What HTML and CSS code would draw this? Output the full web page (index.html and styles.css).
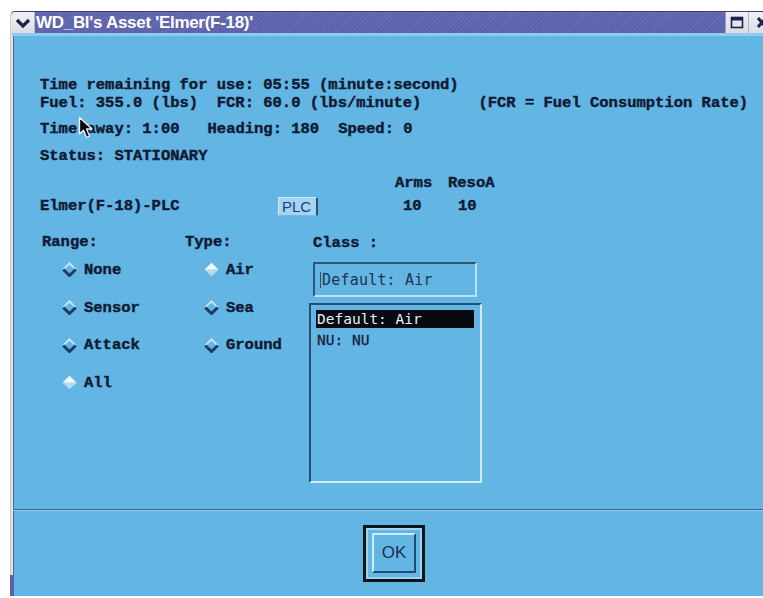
FILE: index.html
```html
<!DOCTYPE html>
<html lang="en">
<head>
<meta charset="utf-8">
<title>WD_Bl's Asset 'Elmer(F-18)'</title>
<link rel="stylesheet" href="styles.css">
</head>
<body>
<div class="window">
  <div class="titlebar">
    <div class="wm-btn menu-btn">
      <svg width="16" height="10" viewBox="0 0 16 10"><polyline points="2,2 8,8 14,2" fill="none" stroke="#1b2150" stroke-width="3.2" stroke-linejoin="miter"/></svg>
    </div>
    <div class="title">WD_Bl's Asset 'Elmer(F-18)'</div>
    <div class="wm-btn max-btn">
      <svg width="14" height="13" viewBox="0 0 14 13"><rect x="1.5" y="1.5" width="11" height="10" fill="none" stroke="#1b2150" stroke-width="1.6"/><rect x="1" y="1" width="12" height="3.5" fill="#1b2150"/></svg>
    </div>
    <div class="wm-btn close-btn">
      <svg width="14" height="13" viewBox="0 0 14 13"><path d="M3 2 L11 11 M11 2 L3 11" stroke="#1b2150" stroke-width="3"/></svg>
    </div>
    <div class="wm-edge"></div>
  </div>

  <div class="client">
    <div class="content">
      <div class="info">
        <div class="line">Time remaining for use: 05:55 (minute:second)</div>
        <div class="line fuel"><span>Fuel: 355.0 (lbs)  FCR: 60.0 (lbs/minute)</span><span class="note">(FCR = Fuel Consumption Rate)</span></div>
        <div class="line away"><span>Time away: 1:00</span><span class="heading">Heading: 180</span><span class="speed">Speed: 0</span></div>
        <div class="line status">Status: STATIONARY</div>
      </div>

      <div class="asset-grid">
        <span></span>
        <span></span>
        <span class="col-head">Arms</span>
        <span class="col-head">ResoA</span>
        <span class="asset-name">Elmer(F-18)-PLC</span>
        <span><button class="plc-btn" type="button">PLC</button></span>
        <span class="val arms">10</span>
        <span class="val reso">10</span>
      </div>

      <div class="options">
        <div class="opt-col range-col">
          <div class="opt-label">Range:</div>
          <div class="radio"><svg class="diamond" viewBox="0 0 14 14"><polyline points="1.2,7 7,1.2 12.8,7" fill="none" stroke="#cde9f8" stroke-width="1.6"/><polyline points="1.2,7 7,12.6 12.8,7" fill="none" stroke="#1b3d64" stroke-width="2.8"/></svg>None</div>
          <div class="radio"><svg class="diamond" viewBox="0 0 14 14"><polyline points="1.2,7 7,1.2 12.8,7" fill="none" stroke="#cde9f8" stroke-width="1.6"/><polyline points="1.2,7 7,12.6 12.8,7" fill="none" stroke="#1b3d64" stroke-width="2.8"/></svg>Sensor</div>
          <div class="radio"><svg class="diamond" viewBox="0 0 14 14"><polyline points="1.2,7 7,1.2 12.8,7" fill="none" stroke="#cde9f8" stroke-width="1.6"/><polyline points="1.2,7 7,12.6 12.8,7" fill="none" stroke="#1b3d64" stroke-width="2.8"/></svg>Attack</div>
          <div class="radio"><svg class="diamond" viewBox="0 0 14 14"><polygon points="0.5,7.2 7,0.6 13.5,7.2" fill="#f7fcff"/><polygon points="0.5,7.2 7,13.4 13.5,7.2" fill="#b0dcf4"/></svg>All</div>
        </div>
        <div class="opt-col type-col">
          <div class="opt-label">Type:</div>
          <div class="radio"><svg class="diamond" viewBox="0 0 14 14"><polygon points="0.5,7.2 7,0.6 13.5,7.2" fill="#f7fcff"/><polygon points="0.5,7.2 7,13.4 13.5,7.2" fill="#b0dcf4"/></svg>Air</div>
          <div class="radio"><svg class="diamond" viewBox="0 0 14 14"><polyline points="1.2,7 7,1.2 12.8,7" fill="none" stroke="#cde9f8" stroke-width="1.6"/><polyline points="1.2,7 7,12.6 12.8,7" fill="none" stroke="#1b3d64" stroke-width="2.8"/></svg>Sea</div>
          <div class="radio"><svg class="diamond" viewBox="0 0 14 14"><polyline points="1.2,7 7,1.2 12.8,7" fill="none" stroke="#cde9f8" stroke-width="1.6"/><polyline points="1.2,7 7,12.6 12.8,7" fill="none" stroke="#1b3d64" stroke-width="2.8"/></svg>Ground</div>
        </div>
        <div class="opt-col class-col">
          <div class="opt-label class-label">Class :</div>
          <div class="text-field"><span class="caret"></span>Default: Air</div>
          <div class="list-box">
            <div class="list-item selected">Default: Air</div>
            <div class="list-item">NU: NU</div>
          </div>
        </div>
      </div>
    </div>

    <div class="footer">
      <div class="default-ring">
        <button class="ok-btn" type="button">OK</button>
      </div>
    </div>
  </div>
  <div class="resize-grip"></div>
</div>

<svg class="pointer" width="18" height="24" viewBox="0 0 18 24">
  <path d="M1.5 1.5 L1.5 18 L5.5 14.2 L8.6 21.5 L11.6 20.2 L8.6 13 L14 13 Z" fill="#0b0b10" stroke="#f2f2f2" stroke-width="1.3" stroke-linejoin="round"/>
</svg>
</body>
</html>
```

FILE: styles.css
```css
html, body {
  margin: 0;
  padding: 0;
}

body {
  width: 763px;
  height: 598px;
  overflow: hidden;
  background: #ffffff;
  position: relative;
}

.window {
  margin: 11px 0 0 10px;
  width: 766px;
  border-left: 1px solid #c9c9cf;
  border-radius: 5px 0 0 0;
  position: relative;
}

/* ---------- title bar ---------- */
.titlebar {
  display: flex;
  height: 22px;
  border-top: 1px solid #3a3f73;
  box-sizing: border-box;
  background:
    repeating-linear-gradient(135deg, rgba(255,255,255,0.08) 0 1px, rgba(0,0,0,0) 1px 3px),
    linear-gradient(#5e64b0, #5a60a9);
  border-radius: 4px 0 0 0;
}

.wm-btn {
  width: 24px;
  flex: none;
  display: flex;
  align-items: center;
  justify-content: center;
  background: linear-gradient(#f0f0f4, #dcdce4);
  box-sizing: border-box;
}

.menu-btn {
  border-radius: 4px 0 0 0;
  border-right: 1px solid #b9bac8;
}

.max-btn {
  border-left: 1px solid #9a9cb8;
  border-right: 1px solid #b0b2c4;
}

.close-btn {
  justify-content: flex-start;
  padding-left: 6px;
}

.wm-edge {
  width: 4px;
  flex: none;
  background: #d8d8e0;
}

.title {
  flex: 1;
  padding-left: 1px;
  font-family: "Liberation Sans", Arial, sans-serif;
  font-weight: bold;
  font-size: 17px;
  line-height: 21px;
  color: #ffffff;
  letter-spacing: -0.3px;
  white-space: nowrap;
}

/* ---------- client area ---------- */
.client {
  width: 764px;
  box-sizing: border-box;
  border-left: 2px solid #e4e4e8;
  border-top: 3px solid #8fcbec;
  background: #63b6e4;
  box-shadow: inset 1px 0 0 #47698c;
}

.content {
  height: 473px;
  padding: 40px 0 0 27px;
  box-sizing: border-box;
  font-family: "Liberation Mono", "Courier New", monospace;
  font-weight: bold;
  font-size: 15.5px;
  color: #111a33;
  -webkit-text-stroke: 0.45px #111a33;
}

.line {
  height: 18px;
  line-height: 18px;
  white-space: pre;
}

.fuel {
  display: flex;
}

.fuel .note {
  margin-left: 57px;
}

.away {
  margin-top: 8px;
  display: flex;
}

.away .heading {
  margin-left: 28px;
}

.away .speed {
  margin-left: 19px;
}

.status {
  margin-top: 9px;
}

/* ---------- asset row ---------- */
.asset-grid {
  margin-top: 9px;
  display: grid;
  grid-template-columns: 238px 117px 53px 50px;
  grid-template-rows: 18px 20px;
  row-gap: 4px;
  align-items: center;
  line-height: 18px;
}

.val.arms {
  padding-left: 8px;
}

.val.reso {
  padding-left: 10px;
}

.plc-btn {
  display: block;
  width: 40px;
  height: 19px;
  padding: 0 0 0 3px;
  margin: 1px 0 0 0;
  text-align: left;
  font-family: "Liberation Sans", Arial, sans-serif;
  font-weight: normal;
  font-size: 15px;
  line-height: 15px;
  color: #1d3a7a;
  -webkit-text-stroke: 0;
  background: #a3d5f0;
  border: 0;
  border-top: 1px solid #cfeafa;
  border-left: 1px solid #cfeafa;
  border-right: 2px solid #2d4f82;
  border-bottom: 1px solid #7fb6d8;
  box-sizing: border-box;
}

/* ---------- option columns ---------- */
.options {
  margin-top: 17px;
  display: flex;
}

.opt-label {
  height: 18px;
  line-height: 18px;
}

.range-col {
  width: 145px;
}

.range-col .opt-label {
  padding-left: 2px;
}

.type-col {
  width: 124px;
}

.range-col .radio {
  padding-left: 22px;
}

.type-col .radio {
  padding-left: 19px;
}

.radio {
  height: 37.7px;
  display: flex;
  align-items: center;
}

.diamond {
  width: 15px;
  height: 15px;
  margin-right: 7px;
  flex: none;
}

.class-col {
  width: 180px;
}

.class-label {
  padding-left: 4px;
  position: relative;
  top: 1px;
}

.text-field {
  margin: 11px 0 0 4px;
  width: 164px;
  height: 35px;
  box-sizing: border-box;
  border-top: 2px solid #2f5679;
  border-left: 2px solid #2f5679;
  border-right: 2px solid #b9e1f7;
  border-bottom: 2px solid #b9e1f7;
  display: flex;
  align-items: center;
  padding-left: 5px;
  font-family: "DejaVu Sans Mono", monospace;
  font-weight: normal;
  font-size: 15px;
  color: #1f3350;
  -webkit-text-stroke: 0;
  letter-spacing: 0.2px;
}

.caret {
  width: 1px;
  height: 16px;
  background: #3a4e6a;
  margin-right: 1px;
}

.list-box {
  margin-top: 6px;
  width: 173px;
  height: 180px;
  box-sizing: border-box;
  border-top: 2px solid #294d72;
  border-left: 2px solid #294d72;
  border-right: 2px solid #cdebfb;
  border-bottom: 2px solid #cdebfb;
  padding: 5px 6px 0 5px;
  font-family: "DejaVu Sans Mono", monospace;
  font-weight: normal;
  font-size: 14.5px;
  color: #15243d;
  -webkit-text-stroke: 0.3px #15243d;
}

.list-item {
  height: 18px;
  line-height: 18px;
  padding-left: 1px;
  white-space: pre;
}

.list-item.selected {
  background: #080a10;
  color: #e4f2ff;
  -webkit-text-stroke: 0;
  margin-bottom: 3px;
}

/* ---------- footer ---------- */
.footer {
  height: 87px;
  box-sizing: border-box;
  border-top: 1px solid #36658f;
  box-shadow: inset 0 1px 0 #94cdee;
  display: flex;
  align-items: center;
  justify-content: center;
}

.default-ring {
  width: 62px;
  height: 57px;
  box-sizing: border-box;
  border: 3px solid #101318;
  box-shadow: inset 0 0 0 2px #9fd4f2;
  display: flex;
  align-items: center;
  justify-content: center;
}

.ok-btn {
  width: 44px;
  height: 40px;
  box-sizing: border-box;
  background: #63b6e4;
  border-top: 2px solid #cdebfb;
  border-left: 2px solid #cdebfb;
  border-right: 2px solid #264a72;
  border-bottom: 2px solid #264a72;
  padding: 0;
  font-family: "Liberation Sans", Arial, sans-serif;
  font-size: 17px;
  color: #1b2e4e;
}

.resize-grip {
  position: absolute;
  left: -1px;
  top: 564px;
  width: 4px;
  height: 21px;
  background: #5960a8;
}

.pointer {
  position: absolute;
  left: 78px;
  top: 116px;
}
```
